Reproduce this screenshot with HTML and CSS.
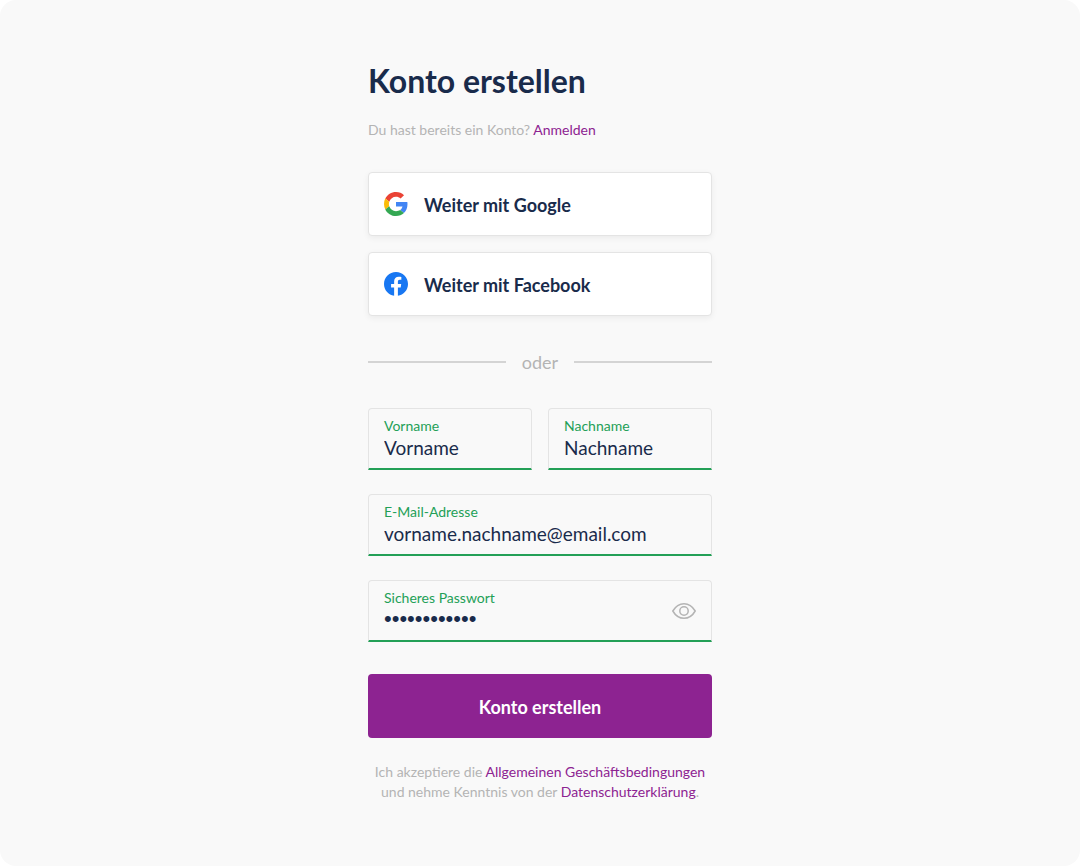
FILE: index.html
```html
<!DOCTYPE html>
<html lang="de">
<head>
  <meta charset="UTF-8" />
  <meta name="viewport" content="width=device-width, initial-scale=1" />
  <title>Konto erstellen</title>
  <link rel="stylesheet" href="styles.css">
</head>
<body>
  <main class="page">
    <form class="signup" onsubmit="return false">
      <h1>Konto erstellen</h1>
      <p class="login-hint">Du hast bereits ein Konto? <a href="#">Anmelden</a></p>

      <div class="social">
        <button type="button" class="social-btn">
          <svg width="24" height="24" viewBox="0 0 48 48" aria-hidden="true">
            <path fill="#EA4335" d="M24 9.5c3.54 0 6.71 1.22 9.21 3.6l6.85-6.85C35.9 2.38 30.47 0 24 0 14.62 0 6.51 5.38 2.56 13.22l7.98 6.19C12.43 13.72 17.74 9.5 24 9.5z"/>
            <path fill="#4285F4" d="M46.98 24.55c0-1.57-.15-3.09-.38-4.55H24v9.02h12.94c-.58 2.96-2.26 5.48-4.78 7.18l7.73 6c4.51-4.18 7.09-10.36 7.09-17.65z"/>
            <path fill="#FBBC05" d="M10.53 28.59c-.48-1.45-.76-2.99-.76-4.59s.27-3.14.76-4.59l-7.98-6.19C.92 16.46 0 20.12 0 24c0 3.88.92 7.54 2.56 10.78l7.97-6.19z"/>
            <path fill="#34A853" d="M24 48c6.48 0 11.93-2.13 15.89-5.81l-7.73-6c-2.15 1.45-4.92 2.3-8.16 2.3-6.26 0-11.57-4.22-13.47-9.91l-7.98 6.19C6.51 42.62 14.62 48 24 48z"/>
          </svg>
          <span>Weiter mit Google</span>
        </button>
        <button type="button" class="social-btn">
          <svg width="24" height="24" viewBox="0 0 24 24" aria-hidden="true">
            <path fill="#1877F2" d="M24 12c0-6.63-5.37-12-12-12S0 5.37 0 12c0 5.99 4.39 10.95 10.13 11.85v-8.38H7.08V12h3.05V9.36c0-3.01 1.79-4.67 4.53-4.67 1.31 0 2.69.23 2.69.23v2.95h-1.51c-1.49 0-1.96.93-1.96 1.88V12h3.33l-.53 3.47h-2.8v8.38C19.61 22.95 24 17.99 24 12z"/>
          </svg>
          <span>Weiter mit Facebook</span>
        </button>
      </div>

      <div class="divider">oder</div>

      <div class="fields">
        <div class="field-row">
          <div class="field">
            <label for="firstName">Vorname</label>
            <input type="text" id="firstName" value="Vorname" />
          </div>
          <div class="field">
            <label for="lastName">Nachname</label>
            <input type="text" id="lastName" value="Nachname" />
          </div>
        </div>
        <div class="field">
          <label for="email">E-Mail-Adresse</label>
          <input type="email" id="email" value="vorname.nachname@email.com" />
        </div>
        <div class="field field-password">
          <div class="field-text">
            <label for="password">Sicheres Passwort</label>
            <input type="password" id="password" value="passwort1234" />
          </div>
          <button type="button" class="toggle-btn" aria-label="Passwort anzeigen" onclick="togglePassword()">
            <svg width="24" height="24" viewBox="0 0 24 24" fill="none" stroke="#b4b4b4" stroke-width="1.5" aria-hidden="true">
              <path d="M.8 12C3.600 7.200 7.500 4.700 12 4.700S20.400 7.200 23.200 12C20.400 16.800 16.500 19.300 12 19.300S3.600 16.800.8 12z" stroke-linejoin="round"/>
              <circle cx="12" cy="12" r="4.200"/>
            </svg>
          </button>
        </div>
      </div>

      <button type="submit" class="submit-btn">Konto erstellen</button>

      <p class="terms">
        Ich akzeptiere die <a href="#">Allgemeinen Geschäftsbedingungen</a>
        und nehme Kenntnis von der <a href="#">Datenschutzerklärung</a>.
      </p>
    </form>
  </main>

  <script>
    function togglePassword() {
      const input = document.getElementById('password');
      input.type = input.type === 'password' ? 'text' : 'password';
    }
  </script>
</body>
</html>
```
FILE: styles.css
```css
* {
  box-sizing: border-box;
}
body {
  margin: 0;
  font-family: Lato, "Liberation Sans", sans-serif;
  color: #192b4b;
  background-color: #fff;
}
button,
input {
  font-family: inherit;
  color: inherit;
}
a {
  color: #8d2391;
  text-decoration: none;
}
a:hover {
  text-decoration: underline;
}

.page {
  min-height: 100vh;
  padding: 60px 16px;
  background-color: #f9f9f9;
  border-radius: 16px;
}
.signup {
  max-width: 344px;
  margin: 0 auto;
}
h1 {
  margin: 0;
  font-size: 32px;
  line-height: 42px;
  font-weight: bold;
}
.login-hint {
  margin: 18px 0 32px;
  font-size: 14px;
  line-height: 20px;
  color: #b4b4b4;
}

.social {
  display: flex;
  flex-direction: column;
  gap: 16px;
}
.social-btn {
  display: flex;
  align-items: center;
  gap: 16px;
  height: 64px;
  padding: 0 15px;
  font-size: 18px;
  font-weight: bold;
  background-color: #fff;
  border: 1px solid #e4e4e4;
  border-radius: 4px;
  box-shadow: 0 2px 6px rgba(0, 0, 0, 0.06);
  cursor: pointer;
}
.social-btn span {
  padding-top: 2px;
}

.divider {
  display: flex;
  align-items: center;
  gap: 16px;
  margin: 32px 0;
  font-size: 18px;
  line-height: 28px;
  color: #b4b4b4;
}
.divider::before,
.divider::after {
  content: "";
  flex: 1;
  height: 2px;
  background-color: #d4d4d4;
}

.fields {
  display: flex;
  flex-direction: column;
  gap: 24px;
}
.field-row {
  display: flex;
  gap: 16px;
}
.field {
  flex: 1;
  min-width: 0;
  height: 62px;
  padding: 7px 15px;
  border: 1px solid #e4e4e4;
  border-bottom: 2px solid #23a057;
  border-radius: 4px 4px 0 0;
}
.field label {
  display: block;
  font-size: 14px;
  line-height: 20px;
  color: #23a057;
}
.field input {
  display: block;
  width: 100%;
  height: 22px;
  padding: 0;
  font-size: 19px;
  background: none;
  border: none;
  outline: none;
}
.fields > .field {
  flex: none;
}
.field-password {
  display: flex;
  justify-content: space-between;
}
.field-text {
  flex: 1;
}
.field input[type="password"] {
  font-family: "Liberation Sans", sans-serif;
  font-size: 22px;
}
.toggle-btn {
  display: flex;
  align-items: center;
  padding: 0;
  background: none;
  border: none;
  cursor: pointer;
}

.submit-btn {
  display: block;
  width: 100%;
  height: 64px;
  margin-top: 32px;
  padding: 2px 0 0;
  font-size: 18px;
  font-weight: bold;
  color: #fff;
  background-color: #8d2391;
  border: none;
  border-radius: 4px;
  cursor: pointer;
}
.submit-btn:hover {
  background-color: #751b79;
}
.terms {
  margin: 24px 0 0;
  font-size: 14px;
  line-height: 20px;
  text-align: center;
  color: #b4b4b4;
}
```
